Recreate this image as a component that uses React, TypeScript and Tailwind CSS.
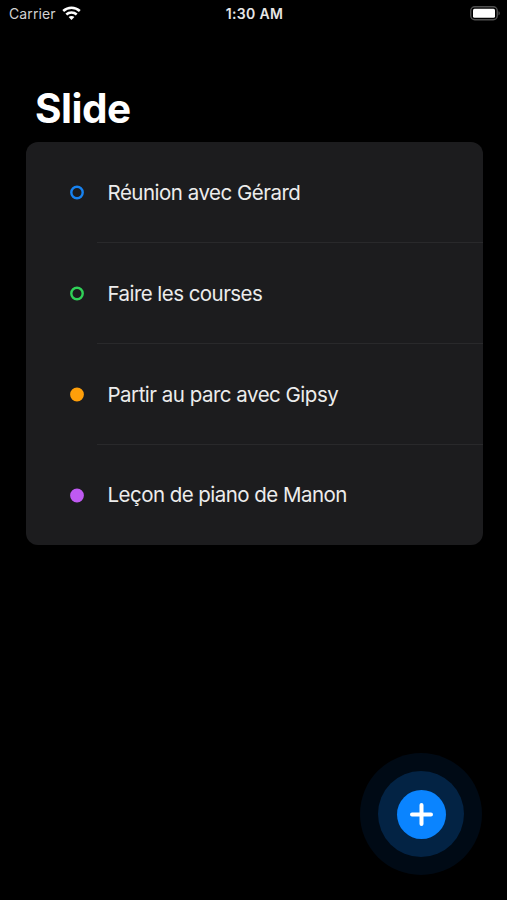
import { useState } from 'react'

interface Task {
  id: number
  title: string
  done: boolean
  color: string
  tracking: string
}

const TASKS: Task[] = [
  { id: 1, title: 'Réunion avec Gérard', done: false, color: 'text-[#1782f0]', tracking: 'tracking-[-0.5px]' },
  { id: 2, title: 'Faire les courses', done: false, color: 'text-[#30d158]', tracking: 'tracking-[-0.55px]' },
  { id: 3, title: 'Partir au parc avec Gipsy', done: true, color: 'text-[#ff9f0a]', tracking: 'tracking-[-0.5px]' },
  { id: 4, title: 'Leçon de piano de Manon', done: true, color: 'text-[#bf5af2]', tracking: 'tracking-[-0.54px]' },
]

function StatusBar() {
  return (
    <header className="grid h-[27px] grid-cols-3 items-center pl-[9px] pr-[7px] text-[14px] leading-none">
      <div className="flex items-center gap-[6px] text-[#d2d2d2]">
        <span className="tracking-[0.1px]">Carrier</span>
        <svg width="19" height="15" viewBox="0 0 19 15" fill="none" stroke="#fff" strokeWidth="2.5">
          <path d="M1.2 5C5.9 .5 13.1 .5 17.8 5" />
          <path d="M4.3 8.5C7.2 5.7 11.8 5.7 14.7 8.5" />
          <path d="M9.5 14L6.6 11.1C8.2 9.6 10.8 9.6 12.4 11.1Z" fill="#fff" stroke="none" />
        </svg>
      </div>
      <span className="text-center font-semibold tracking-[0.35px] text-[#e6e6e6]">1:30 AM</span>
      <svg className="justify-self-end" width="30" height="15" viewBox="0 0 30 15">
        <rect x=".75" y=".75" width="26.5" height="13" rx="4" fill="none" stroke="#505050" strokeWidth="1.4" />
        <rect x="3" y="2.8" width="22" height="9" rx="1.5" fill="#fff" />
        <path d="M28.5 5.2C30.2 5.9 30.2 8.6 28.5 9.3Z" fill="#505050" />
      </svg>
    </header>
  )
}

function TaskRow({ task, last, onToggle }: { task: Task; last: boolean; onToggle: () => void }) {
  return (
    <li className={last ? 'flex h-[100px] items-center pl-[44px]' : 'flex h-[101px] items-center pl-[44px]'}>
      <button onClick={onToggle} aria-label={task.title} className={`shrink-0 ${task.color}`}>
        <svg width="15" height="15" viewBox="0 0 15 15" stroke="currentColor" strokeWidth="2.4">
          <circle cx="7" cy="7.5" r="5.7" fill={task.done ? 'currentColor' : 'none'} />
        </svg>
      </button>
      <div className={`ml-[12px] flex flex-1 items-center self-stretch pl-[11px] ${last ? '' : 'border-b border-[#29292b] pt-px'}`}>
        <span className={`text-[20.5px] leading-[32px] whitespace-nowrap text-[#ececec] ${task.tracking}`}>{task.title}</span>
      </div>
    </li>
  )
}

export default function App() {
  const [tasks, setTasks] = useState(TASKS)

  const toggle = (id: number) =>
    setTasks(list => list.map(t => (t.id === id ? { ...t, done: !t.done } : t)))

  return (
    <div className="flex h-[900px] w-[507px] flex-col overflow-hidden bg-black font-['Inter','Liberation_Sans',sans-serif] text-white">
      <StatusBar />
      <h1 className="mt-[58px] ml-[35px] h-[57px] text-[40.5px] leading-[48px] font-bold tracking-[-0.5px]">Slide</h1>

      <ul className="mr-[24.5px] ml-[25.5px] overflow-hidden rounded-[12px] bg-[#1c1c1e]">
        {tasks.map((t, i) => (
          <TaskRow key={t.id} task={t} last={i === tasks.length - 1} onToggle={() => toggle(t.id)} />
        ))}
      </ul>

      {/* Bouton d'ajout avec ses deux halos */}
      <div className="mt-auto mr-[25px] mb-[25px] flex size-[122px] items-center justify-center self-end rounded-full bg-[#000a15]">
        <div className="flex size-[86px] items-center justify-center rounded-full bg-[#032344]">
          <button aria-label="Ajouter" className="flex size-[49px] items-center justify-center rounded-full bg-[#0a84ff]">
            <svg width="25" height="25" viewBox="0 0 25 25" stroke="#fff" strokeWidth="4" strokeLinecap="round">
              <path d="M12.5 3V22M3 12.5H22" />
            </svg>
          </button>
        </div>
      </div>
    </div>
  )
}
